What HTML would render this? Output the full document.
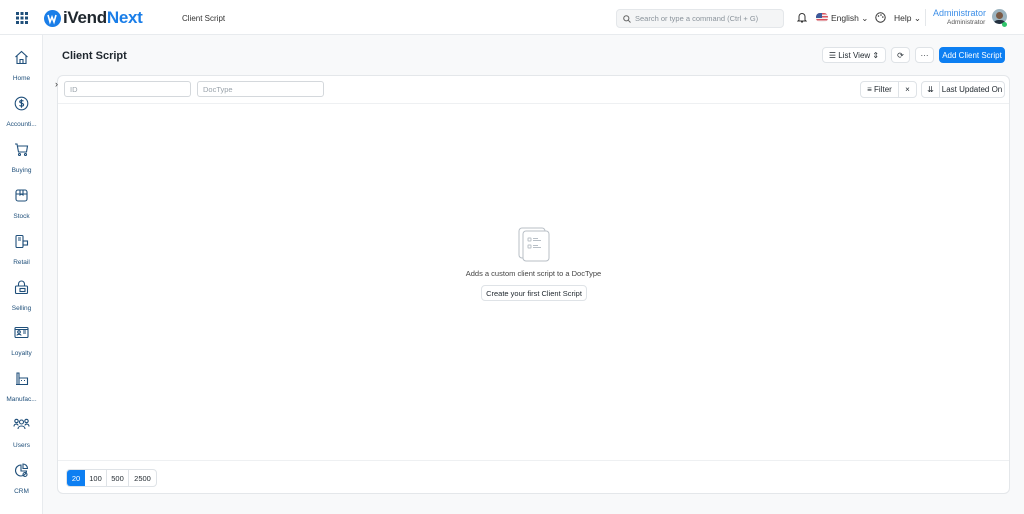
<!DOCTYPE html>
<html><head><meta charset="utf-8"><style>
*{box-sizing:border-box;margin:0;padding:0}
body{width:1024px;height:514px;overflow:hidden;background:#f8f9fa;font-family:"Liberation Sans",sans-serif;color:#1f272e;position:relative;font-size:8px}
.top{position:absolute;left:0;top:0;width:1024px;height:35px;background:#fff;border-bottom:1px solid #e8ebee}
.side{position:absolute;left:0;top:35px;width:43px;height:479px;background:#fff;border-right:1px solid #e8ebee}
.si{position:absolute;left:0;width:43px;text-align:center;color:#1f4f7a;font-size:6.5px}
.si svg{display:block;margin:0 auto 10px}
.btn{position:absolute;background:#fff;border:1px solid #dfe3e7;border-radius:4px;font-size:8px;display:flex;align-items:center;justify-content:center;color:#1f272e}
.card{position:absolute;left:57px;top:75px;width:953px;height:419px;background:#fff;border:1px solid #e4e7ea;border-radius:6px}
.inp{position:absolute;top:5px;height:16px;border:1px solid #d4d8dc;border-radius:3px;font-size:7.5px;color:#9aa3ab;padding:3px 5px}
</style></head><body>
<div class="top">
 <svg style="position:absolute;left:16px;top:12px" width="12" height="12" viewBox="0 0 12 12" fill="#1f4f7a"><rect x="0" y="0" width="3" height="3"/><rect x="4.5" y="0" width="3" height="3"/><rect x="9" y="0" width="3" height="3"/><rect x="0" y="4.5" width="3" height="3"/><rect x="4.5" y="4.5" width="3" height="3"/><rect x="9" y="4.5" width="3" height="3"/><rect x="0" y="9" width="3" height="3"/><rect x="4.5" y="9" width="3" height="3"/><rect x="9" y="9" width="3" height="3"/></svg>
 <svg style="position:absolute;left:44px;top:10px" width="17" height="17" viewBox="0 0 17 17"><circle cx="8.5" cy="8.5" r="8.5" fill="#1a7ee8"/><path d="M4 5 L6 12 L8 7 L10 12 L12 5" stroke="#fff" stroke-width="1.6" fill="none"/></svg>
 <div style="position:absolute;left:63px;top:8px;font-size:17px;font-weight:bold;color:#1f272e;letter-spacing:-0.3px">iVend<span style="color:#1a7ee8">Next</span></div>
 <div style="position:absolute;left:182px;top:14px;font-size:8px;color:#333">Client Script</div>
 <div style="position:absolute;left:616px;top:9px;width:168px;height:19px;background:#f4f5f6;border:1px solid #e4e7ea;border-radius:4px;font-size:7.5px;color:#8a939b;padding:4px 0 0 18px">Search or type a command (Ctrl + G)
  <svg style="position:absolute;left:6px;top:5px" width="8" height="8" viewBox="0 0 8 8"><circle cx="3.3" cy="3.3" r="2.6" stroke="#666" fill="none"/><path d="M5.3 5.3L7.5 7.5" stroke="#666"/></svg></div>
 <svg style="position:absolute;left:797px;top:12px" width="10" height="11" viewBox="0 0 10 11"><path d="M2 8V4.5a3 3 0 0 1 6 0V8l1 1H1z M4 10h2" stroke="#333" fill="none"/></svg>
 <div style="position:absolute;left:816px;top:13px;width:12px;height:9px;border-radius:4px;background:repeating-linear-gradient(#d9525e 0 1.5px,#f2f2f2 1.5px 3px)"><div style="width:6px;height:5px;background:#3c5a9a;border-radius:4px 0 0 0"></div></div>
 <div style="position:absolute;left:831px;top:13px;font-size:8.5px;color:#333">English ⌄</div>
 <svg style="position:absolute;left:875px;top:12px" width="11" height="11" viewBox="0 0 11 11"><circle cx="5.5" cy="5.5" r="4.7" stroke="#333" fill="none"/><circle cx="3.5" cy="4" r=".8" fill="#333"/><circle cx="6" cy="3" r=".8" fill="#333"/><circle cx="7.8" cy="5" r=".8" fill="#333"/></svg>
 <div style="position:absolute;left:894px;top:13px;font-size:8.5px;color:#333">Help ⌄</div>
 <div style="position:absolute;left:925px;top:9px;width:1px;height:17px;background:#e4e7ea"></div>
 <div style="position:absolute;left:933px;top:8px;font-size:9px;color:#3d8fe8">Administrator</div>
 <div style="position:absolute;left:947px;top:19px;font-size:6.5px;color:#555">Administrator</div>
 <div style="position:absolute;left:992px;top:9px;width:15px;height:15px;border-radius:50%;background:#9cb4c0;overflow:hidden"><div style="margin:3px auto 0;width:7px;height:7px;border-radius:50%;background:#7a5a45"></div><div style="margin:1px auto 0;width:13px;height:6px;background:#23303f;border-radius:5px 5px 0 0"></div></div>
 <div style="position:absolute;left:1002px;top:22px;width:5px;height:5px;border-radius:50%;background:#2fc46a"></div>
</div>
<div class="side">
 <div class="si" style="top:15px"><svg width="15" height="15" viewBox="0 0 15 15" fill="none" stroke="#1f4f7a" stroke-width="1.1"><path d="M1.5 7L7.5 1.5 13.5 7M3 6v7.5h9V6M6 13.5V9.5h3v4"/></svg>Home</div>
 <div class="si" style="top:61px"><svg width="15" height="15" viewBox="0 0 15 15" fill="none" stroke="#1f4f7a" stroke-width="1.1"><circle cx="7.5" cy="7.5" r="6.3"/><path d="M9.5 5.2c-.5-.8-3.8-1.2-3.8.6s3.9.9 3.9 2.9c0 1.8-3.4 1.6-4.1.6M7.5 3.3v8.4"/></svg>Accounti...</div>
 <div class="si" style="top:107px"><svg width="15" height="15" viewBox="0 0 15 15" fill="none" stroke="#1f4f7a" stroke-width="1.1"><path d="M1 2h2l1.5 8h8l1-6H4"/><circle cx="5.5" cy="12.5" r="1"/><circle cx="11.5" cy="12.5" r="1"/></svg>Buying</div>
 <div class="si" style="top:153px"><svg width="15" height="15" viewBox="0 0 15 15" fill="none" stroke="#1f4f7a" stroke-width="1.1"><rect x="2" y="2" width="11" height="11" rx="2"/><path d="M2 6h11M6 2v5l1.5-1 1.5 1V2"/></svg>Stock</div>
 <div class="si" style="top:199px"><svg width="15" height="15" viewBox="0 0 15 15" fill="none" stroke="#1f4f7a" stroke-width="1.1"><rect x="2" y="1.5" width="7" height="12" rx="1"/><rect x="9" y="7" width="4.5" height="4"/><path d="M4 4h3M4 6h3"/></svg>Retail</div>
 <div class="si" style="top:245px"><svg width="15" height="15" viewBox="0 0 15 15" fill="none" stroke="#1f4f7a" stroke-width="1.1"><rect x="1.5" y="6" width="12" height="7.5" rx="1"/><path d="M4.5 6V4a3 3 0 0 1 6 0v2"/><rect x="6" y="8.5" width="5" height="3"/></svg>Selling</div>
 <div class="si" style="top:290px"><svg width="15" height="15" viewBox="0 0 15 15" fill="none" stroke="#1f4f7a" stroke-width="1.1"><rect x="1" y="2.5" width="13" height="10" rx="1"/><circle cx="5" cy="7" r="1.3"/><path d="M3 10.5c0-1.5 4-1.5 4 0M9 6h3M9 8h3M1 4.5h13"/></svg>Loyalty</div>
 <div class="si" style="top:336px"><svg width="15" height="15" viewBox="0 0 15 15" fill="none" stroke="#1f4f7a" stroke-width="1.1"><path d="M2 13.5h12M3 13.5V2h2v11.5M5 7h8.5v6.5M7 9.5h1M10 9.5h1"/></svg>Manufac...</div>
 <div class="si" style="top:382px"><svg width="17" height="15" viewBox="0 0 17 15" fill="none" stroke="#1f4f7a" stroke-width="1.1"><circle cx="8.5" cy="5" r="2"/><circle cx="3.5" cy="4" r="1.7"/><circle cx="13.5" cy="4" r="1.7"/><path d="M5 12c0-4 7-4 7 0M1 9.5c0-3 4-3 4-1M16 9.5c0-3-4-3-4-1"/></svg>Users</div>
 <div class="si" style="top:428px"><svg width="15" height="15" viewBox="0 0 15 15" fill="none" stroke="#1f4f7a" stroke-width="1.1"><path d="M7 2a5.5 5.5 0 1 0 5.5 6H7z"/><path d="M9 1a4.5 4.5 0 0 1 4.5 4.5H9z"/><circle cx="11" cy="11.5" r="2"/></svg>CRM</div>
</div>
<div style="position:absolute;left:62px;top:50px;font-size:11px;font-weight:bold">Client Script</div>
<div class="btn" style="left:822px;top:47px;width:64px;height:16px">☰&nbsp;List View&nbsp;⇕</div>
<div class="btn" style="left:891px;top:47px;width:19px;height:16px">⟳</div>
<div class="btn" style="left:915px;top:47px;width:19px;height:16px">···</div>
<div class="btn" style="left:939px;top:47px;width:66px;height:16px;background:#0d7ff2;border-color:#0d7ff2;color:#fff">Add Client Script</div>
<div class="card">
 <div style="position:absolute;left:-3px;top:3px;font-size:9px;color:#333">›</div>
 <div class="inp" style="left:6px;width:127px">ID</div>
 <div class="inp" style="left:139px;width:127px">DocType</div>
 <div class="btn" style="left:802px;top:5px;width:39px;height:17px;border-radius:4px 0 0 4px">≡ Filter</div>
 <div class="btn" style="left:840px;top:5px;width:19px;height:17px;border-radius:0 4px 4px 0">×</div>
 <div class="btn" style="left:863px;top:5px;width:19px;height:17px;border-radius:4px 0 0 4px">⇊</div>
 <div class="btn" style="left:881px;top:5px;width:66px;height:17px;border-radius:0 4px 4px 0">Last Updated On</div>
 <div style="position:absolute;left:0;top:27px;width:951px;height:1px;background:#eef0f2"></div>
 <svg style="position:absolute;left:459px;top:150px" width="34" height="36" viewBox="0 0 34 36" fill="#fff" stroke="#b8bfc6" stroke-width="1"><rect x="2" y="2" width="26" height="30" rx="3"/><rect x="6" y="5" width="26" height="30" rx="3"/><rect x="11" y="12" width="3" height="3" rx=".5"/><rect x="11" y="19" width="3" height="3" rx=".5"/><path d="M16 12.5h5M16 14.5h8M16 19.5h5M16 21.5h8"/></svg>
 <div style="position:absolute;left:0;width:951px;top:193px;text-align:center;font-size:7.5px;color:#444">Adds a custom client script to a DocType</div>
 <div class="btn" style="left:423px;top:209px;width:106px;height:16px;font-size:7.5px">Create your first Client Script</div>
 <div style="position:absolute;left:0;top:384px;width:951px;height:1px;background:#eef0f2"></div>
 <div style="position:absolute;left:8px;top:393px;height:18px;width:91px;border:1px solid #dfe3e7;border-radius:4px;display:flex;font-size:7.5px;overflow:hidden">
  <div style="width:18px;background:#0d7ff2;color:#fff;display:flex;align-items:center;justify-content:center">20</div>
  <div style="width:22px;display:flex;align-items:center;justify-content:center;border-right:1px solid #dfe3e7">100</div>
  <div style="width:22px;display:flex;align-items:center;justify-content:center;border-right:1px solid #dfe3e7">500</div>
  <div style="flex:1;display:flex;align-items:center;justify-content:center">2500</div>
 </div>
</div>
</body></html>
